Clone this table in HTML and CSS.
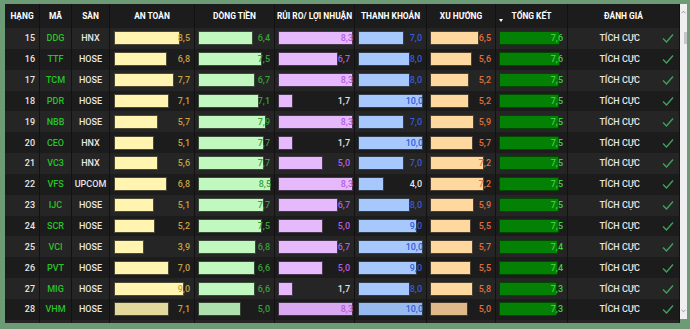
FILE: index.html
```html
<!DOCTYPE html>
<html lang="vi">
<head>
<meta charset="utf-8">
<title>Bảng xếp hạng</title>
<link rel="stylesheet" href="styles.css">
</head>
<body>
<div class="frame">
  <div class="table">
    <div class="row head">
      <div class="cell c">HẠNG</div>
      <div class="cell c">MÃ</div>
      <div class="cell c">SÀN</div>
      <div class="cell c">AN TOÀN</div>
      <div class="cell c">DÒNG TIỀN</div>
      <div class="cell c">RỦI RO/ LỢI NHUẬN</div>
      <div class="cell c">THANH KHOẢN</div>
      <div class="cell c">XU HƯỚNG</div>
      <div class="cell c sort"><span class="tri"></span>TỔNG KẾT</div>
      <div class="cell c">ĐÁNH GIÁ</div>
    </div>

    <div class="row odd">
      <div class="cell r">15</div><div class="cell c code">DDG</div><div class="cell c">HNX</div>
      <div class="cell bc at"><span class="bar" style="width:66px"></span><span class="val">8,5</span></div>
      <div class="cell bc dt"><span class="bar" style="width:55px"></span><span class="val">6,4</span></div>
      <div class="cell bc rr"><span class="bar" style="width:75px"></span><span class="val">8,3</span></div>
      <div class="cell bc tk"><span class="bar" style="width:46px"></span><span class="val">7,0</span></div>
      <div class="cell bc xh"><span class="bar" style="width:49px"></span><span class="val">6,5</span></div>
      <div class="cell bc tg"><span class="bar" style="width:61px"></span><span class="val">7,6</span></div>
      <div class="cell eval"><span class="lbl">TÍCH CỰC</span><svg class="chk" viewBox="0 0 12 10"><polyline points="1,5.5 4.5,9 11,1.5"/></svg></div>
    </div>
    <div class="row even">
      <div class="cell r">16</div><div class="cell c code">TTF</div><div class="cell c">HOSE</div>
      <div class="cell bc at"><span class="bar" style="width:53px"></span><span class="val">6,8</span></div>
      <div class="cell bc dt"><span class="bar" style="width:64px"></span><span class="val">7,5</span></div>
      <div class="cell bc rr"><span class="bar" style="width:60px"></span><span class="val">6,7</span></div>
      <div class="cell bc tk"><span class="bar" style="width:52px"></span><span class="val">8,0</span></div>
      <div class="cell bc xh"><span class="bar" style="width:42px"></span><span class="val">5,6</span></div>
      <div class="cell bc tg"><span class="bar" style="width:61px"></span><span class="val">7,6</span></div>
      <div class="cell eval"><span class="lbl">TÍCH CỰC</span><svg class="chk" viewBox="0 0 12 10"><polyline points="1,5.5 4.5,9 11,1.5"/></svg></div>
    </div>
    <div class="row odd">
      <div class="cell r">17</div><div class="cell c code">TCM</div><div class="cell c">HOSE</div>
      <div class="cell bc at"><span class="bar" style="width:60px"></span><span class="val">7,7</span></div>
      <div class="cell bc dt"><span class="bar" style="width:57px"></span><span class="val">6,7</span></div>
      <div class="cell bc rr"><span class="bar" style="width:75px"></span><span class="val">8,3</span></div>
      <div class="cell bc tk"><span class="bar" style="width:52px"></span><span class="val">8,0</span></div>
      <div class="cell bc xh"><span class="bar" style="width:39px"></span><span class="val">5,2</span></div>
      <div class="cell bc tg"><span class="bar" style="width:60px"></span><span class="val">7,5</span></div>
      <div class="cell eval"><span class="lbl">TÍCH CỰC</span><svg class="chk" viewBox="0 0 12 10"><polyline points="1,5.5 4.5,9 11,1.5"/></svg></div>
    </div>
    <div class="row even">
      <div class="cell r">18</div><div class="cell c code">PDR</div><div class="cell c">HOSE</div>
      <div class="cell bc at"><span class="bar" style="width:55px"></span><span class="val">7,1</span></div>
      <div class="cell bc dt"><span class="bar" style="width:61px"></span><span class="val">7,1</span></div>
      <div class="cell bc rr"><span class="bar" style="width:15px"></span><span class="val low">1,7</span></div>
      <div class="cell bc tk"><span class="bar" style="width:65px"></span><span class="val">10,0</span></div>
      <div class="cell bc xh"><span class="bar" style="width:39px"></span><span class="val">5,2</span></div>
      <div class="cell bc tg"><span class="bar" style="width:60px"></span><span class="val">7,5</span></div>
      <div class="cell eval"><span class="lbl">TÍCH CỰC</span><svg class="chk" viewBox="0 0 12 10"><polyline points="1,5.5 4.5,9 11,1.5"/></svg></div>
    </div>
    <div class="row odd">
      <div class="cell r">19</div><div class="cell c code">NBB</div><div class="cell c">HOSE</div>
      <div class="cell bc at"><span class="bar" style="width:44px"></span><span class="val">5,7</span></div>
      <div class="cell bc dt"><span class="bar" style="width:68px"></span><span class="val">7,9</span></div>
      <div class="cell bc rr"><span class="bar" style="width:75px"></span><span class="val">8,3</span></div>
      <div class="cell bc tk"><span class="bar" style="width:46px"></span><span class="val">7,0</span></div>
      <div class="cell bc xh"><span class="bar" style="width:44px"></span><span class="val">5,9</span></div>
      <div class="cell bc tg"><span class="bar" style="width:60px"></span><span class="val">7,5</span></div>
      <div class="cell eval"><span class="lbl">TÍCH CỰC</span><svg class="chk" viewBox="0 0 12 10"><polyline points="1,5.5 4.5,9 11,1.5"/></svg></div>
    </div>
    <div class="row even">
      <div class="cell r">20</div><div class="cell c code">CEO</div><div class="cell c">HNX</div>
      <div class="cell bc at"><span class="bar" style="width:40px"></span><span class="val">5,1</span></div>
      <div class="cell bc dt"><span class="bar" style="width:66px"></span><span class="val">7,7</span></div>
      <div class="cell bc rr"><span class="bar" style="width:15px"></span><span class="val low">1,7</span></div>
      <div class="cell bc tk"><span class="bar" style="width:65px"></span><span class="val">10,0</span></div>
      <div class="cell bc xh"><span class="bar" style="width:43px"></span><span class="val">5,7</span></div>
      <div class="cell bc tg"><span class="bar" style="width:60px"></span><span class="val">7,5</span></div>
      <div class="cell eval"><span class="lbl">TÍCH CỰC</span><svg class="chk" viewBox="0 0 12 10"><polyline points="1,5.5 4.5,9 11,1.5"/></svg></div>
    </div>
    <div class="row odd">
      <div class="cell r">21</div><div class="cell c code">VC3</div><div class="cell c">HNX</div>
      <div class="cell bc at"><span class="bar" style="width:44px"></span><span class="val">5,6</span></div>
      <div class="cell bc dt"><span class="bar" style="width:66px"></span><span class="val">7,7</span></div>
      <div class="cell bc rr"><span class="bar" style="width:45px"></span><span class="val">5,0</span></div>
      <div class="cell bc tk"><span class="bar" style="width:46px"></span><span class="val">7,0</span></div>
      <div class="cell bc xh"><span class="bar" style="width:54px"></span><span class="val">7,2</span></div>
      <div class="cell bc tg"><span class="bar" style="width:60px"></span><span class="val">7,5</span></div>
      <div class="cell eval"><span class="lbl">TÍCH CỰC</span><svg class="chk" viewBox="0 0 12 10"><polyline points="1,5.5 4.5,9 11,1.5"/></svg></div>
    </div>
    <div class="row even">
      <div class="cell r">22</div><div class="cell c code">VFS</div><div class="cell c">UPCOM</div>
      <div class="cell bc at"><span class="bar" style="width:53px"></span><span class="val">6,8</span></div>
      <div class="cell bc dt"><span class="bar" style="width:73px"></span><span class="val">8,5</span></div>
      <div class="cell bc rr"><span class="bar" style="width:75px"></span><span class="val">8,3</span></div>
      <div class="cell bc tk"><span class="bar" style="width:26px"></span><span class="val low">4,0</span></div>
      <div class="cell bc xh"><span class="bar" style="width:54px"></span><span class="val">7,2</span></div>
      <div class="cell bc tg"><span class="bar" style="width:60px"></span><span class="val">7,5</span></div>
      <div class="cell eval"><span class="lbl">TÍCH CỰC</span><svg class="chk" viewBox="0 0 12 10"><polyline points="1,5.5 4.5,9 11,1.5"/></svg></div>
    </div>
    <div class="row odd">
      <div class="cell r">23</div><div class="cell c code">IJC</div><div class="cell c">HOSE</div>
      <div class="cell bc at"><span class="bar" style="width:40px"></span><span class="val">5,1</span></div>
      <div class="cell bc dt"><span class="bar" style="width:66px"></span><span class="val">7,7</span></div>
      <div class="cell bc rr"><span class="bar" style="width:60px"></span><span class="val">6,7</span></div>
      <div class="cell bc tk"><span class="bar" style="width:52px"></span><span class="val">8,0</span></div>
      <div class="cell bc xh"><span class="bar" style="width:44px"></span><span class="val">5,9</span></div>
      <div class="cell bc tg"><span class="bar" style="width:60px"></span><span class="val">7,5</span></div>
      <div class="cell eval"><span class="lbl">TÍCH CỰC</span><svg class="chk" viewBox="0 0 12 10"><polyline points="1,5.5 4.5,9 11,1.5"/></svg></div>
    </div>
    <div class="row even">
      <div class="cell r">24</div><div class="cell c code">SCR</div><div class="cell c">HOSE</div>
      <div class="cell bc at"><span class="bar" style="width:41px"></span><span class="val">5,2</span></div>
      <div class="cell bc dt"><span class="bar" style="width:64px"></span><span class="val">7,5</span></div>
      <div class="cell bc rr"><span class="bar" style="width:45px"></span><span class="val">5,0</span></div>
      <div class="cell bc tk"><span class="bar" style="width:59px"></span><span class="val">9,0</span></div>
      <div class="cell bc xh"><span class="bar" style="width:41px"></span><span class="val">5,5</span></div>
      <div class="cell bc tg"><span class="bar" style="width:60px"></span><span class="val">7,5</span></div>
      <div class="cell eval"><span class="lbl">TÍCH CỰC</span><svg class="chk" viewBox="0 0 12 10"><polyline points="1,5.5 4.5,9 11,1.5"/></svg></div>
    </div>
    <div class="row odd">
      <div class="cell r">25</div><div class="cell c code">VCI</div><div class="cell c">HOSE</div>
      <div class="cell bc at"><span class="bar" style="width:30px"></span><span class="val">3,9</span></div>
      <div class="cell bc dt"><span class="bar" style="width:58px"></span><span class="val">6,8</span></div>
      <div class="cell bc rr"><span class="bar" style="width:60px"></span><span class="val">6,7</span></div>
      <div class="cell bc tk"><span class="bar" style="width:65px"></span><span class="val">10,0</span></div>
      <div class="cell bc xh"><span class="bar" style="width:43px"></span><span class="val">5,7</span></div>
      <div class="cell bc tg"><span class="bar" style="width:59px"></span><span class="val">7,4</span></div>
      <div class="cell eval"><span class="lbl">TÍCH CỰC</span><svg class="chk" viewBox="0 0 12 10"><polyline points="1,5.5 4.5,9 11,1.5"/></svg></div>
    </div>
    <div class="row even">
      <div class="cell r">26</div><div class="cell c code">PVT</div><div class="cell c">HOSE</div>
      <div class="cell bc at"><span class="bar" style="width:55px"></span><span class="val">7,0</span></div>
      <div class="cell bc dt"><span class="bar" style="width:57px"></span><span class="val">6,6</span></div>
      <div class="cell bc rr"><span class="bar" style="width:45px"></span><span class="val">5,0</span></div>
      <div class="cell bc tk"><span class="bar" style="width:59px"></span><span class="val">9,0</span></div>
      <div class="cell bc xh"><span class="bar" style="width:41px"></span><span class="val">5,5</span></div>
      <div class="cell bc tg"><span class="bar" style="width:59px"></span><span class="val">7,4</span></div>
      <div class="cell eval"><span class="lbl">TÍCH CỰC</span><svg class="chk" viewBox="0 0 12 10"><polyline points="1,5.5 4.5,9 11,1.5"/></svg></div>
    </div>
    <div class="row odd">
      <div class="cell r">27</div><div class="cell c code">MIG</div><div class="cell c">HOSE</div>
      <div class="cell bc at"><span class="bar" style="width:70px"></span><span class="val">9,0</span></div>
      <div class="cell bc dt"><span class="bar" style="width:57px"></span><span class="val">6,6</span></div>
      <div class="cell bc rr"><span class="bar" style="width:15px"></span><span class="val low">1,7</span></div>
      <div class="cell bc tk"><span class="bar" style="width:52px"></span><span class="val">8,0</span></div>
      <div class="cell bc xh"><span class="bar" style="width:43px"></span><span class="val">5,8</span></div>
      <div class="cell bc tg"><span class="bar" style="width:58px"></span><span class="val">7,3</span></div>
      <div class="cell eval"><span class="lbl">TÍCH CỰC</span><svg class="chk" viewBox="0 0 12 10"><polyline points="1,5.5 4.5,9 11,1.5"/></svg></div>
    </div>
    <div class="row even dim">
      <div class="cell r">28</div><div class="cell c code">VHM</div><div class="cell c">HOSE</div>
      <div class="cell bc at"><span class="bar" style="width:55px"></span><span class="val">7,1</span></div>
      <div class="cell bc dt"><span class="bar" style="width:43px"></span><span class="val">5,0</span></div>
      <div class="cell bc rr"><span class="bar" style="width:75px"></span><span class="val">8,3</span></div>
      <div class="cell bc tk"><span class="bar" style="width:65px"></span><span class="val">10,0</span></div>
      <div class="cell bc xh"><span class="bar" style="width:38px"></span><span class="val">5,0</span></div>
      <div class="cell bc tg"><span class="bar" style="width:58px"></span><span class="val">7,3</span></div>
      <div class="cell eval"><span class="lbl">TÍCH CỰC</span><svg class="chk" viewBox="0 0 12 10"><polyline points="1,5.5 4.5,9 11,1.5"/></svg></div>
    </div>
    <div class="row odd">
      <div class="cell"></div><div class="cell"></div><div class="cell"></div>
      <div class="cell bc at"><span class="bar" style="width:46px"></span></div>
      <div class="cell bc dt"><span class="bar" style="width:60px"></span></div>
      <div class="cell bc rr"><span class="bar" style="width:60px"></span></div>
      <div class="cell bc tk"><span class="bar" style="width:52px"></span></div>
      <div class="cell bc xh"><span class="bar" style="width:42px"></span></div>
      <div class="cell bc tg"><span class="bar" style="width:58px"></span></div>
      <div class="cell"></div>
    </div>
  </div>
  <div class="scroll">
    <svg class="arr" viewBox="0 0 6 4"><polyline points="0.5,3.5 3,1 5.5,3.5"/></svg>
    <div class="track"><div class="thumb"></div></div>
    <svg class="arr" viewBox="0 0 6 4"><polyline points="0.5,0.5 3,3 5.5,0.5"/></svg>
  </div>
</div>
</body>
</html>
```

FILE: styles.css
```css
html, body {
  margin: 0;
  padding: 0;
  background: #6c9b76;
  width: 690px;
  height: 329px;
  overflow: hidden;
}

.frame {
  display: flex;
  margin: 4px 3px 0 5px;
  height: 319px;
}

.table {
  width: 675px;
  height: 319px;
  overflow: hidden;
  background: #1d1d1d;
  font-family: Roboto, "Noto Sans", sans-serif;
  color: #e6e6e6;
}

.row {
  display: grid;
  grid-template-columns: 35px 32px 38px 85px 80px 80px 72px 69px 72px 112px;
  height: 20.85px;
  font-size: 9px;
  font-weight: 500;
}

.row.head {
  height: 24px;
  background: #1c1c1c;
  font-size: 8.4px;
  font-weight: 700;
  color: #ffffff;
}

.row.odd { background: #252525; }
.row.even { background: #1c1c1c; }

.cell {
  box-sizing: border-box;
  border-right: 1px solid #121212;
  display: flex;
  align-items: center;
  padding: 0 3px;
  white-space: nowrap;
  overflow: hidden;
}

.cell.c { justify-content: center; }
.cell.r { justify-content: flex-end; padding-right: 4px; }

.code { color: #27c427; }

.sort { position: relative; }
.tri {
  position: absolute;
  left: 3px;
  top: 15px;
  width: 0;
  height: 0;
  border-left: 2.5px solid transparent;
  border-right: 2.5px solid transparent;
  border-top: 3px solid #ffffff;
}

.bc {
  display: grid;
  align-items: center;
  padding: 0 4px 0 3px;
}
.bc.at { padding-left: 4px; }

.bar {
  grid-area: 1 / 1;
  justify-self: start;
  box-sizing: border-box;
  height: 14px;
  border: 1px solid rgba(0, 0, 0, 0.7);
}

.val {
  grid-area: 1 / 1;
  justify-self: end;
  position: relative;
  z-index: 1;
  font-weight: 500;
}

.at .bar { background: #fff4b0; }
.at .val { color: #c9a240; }
.dt .bar { background: #c0f8c0; }
.dt .val { color: #3aa03a; }
.rr .bar { background: #e6b8fc; }
.rr .val { color: #b55ee0; }
.tk .bar { background: #a6c8fc; }
.tk .val { color: #3a5ad8; }
.xh .bar { background: #ffd8a0; }
.xh .val { color: #e0703c; }
.tg .bar { background: #048004; border-color: rgba(0, 0, 0, 0.45); }
.tg .val { color: #40d040; }

.val.low { color: #e6e6e6; }

.dim .at .bar { background: #e3d99c; }
.dim .dt .bar { background: #aee0ae; }
.dim .rr .bar { background: #d8a8f0; }
.dim .tk .bar { background: #98bbef; }
.dim .xh .bar { background: #dfb98a; }

.eval {
  justify-content: flex-end;
  padding-right: 5px;
}
.lbl {
  margin-right: 22px;
}
.chk {
  width: 12px;
  height: 10px;
  fill: none;
  stroke: #3fa25a;
  stroke-width: 1.4;
}

.scroll {
  width: 7px;
  height: 315px;
  background: #efefef;
  display: flex;
  flex-direction: column;
  align-items: center;
}
.arr {
  width: 5px;
  height: 4px;
  margin: 6px 0;
  fill: none;
  stroke: #8a8a8a;
  stroke-width: 1;
}
.track {
  flex: 1;
  width: 100%;
  display: flex;
  justify-content: flex-end;
}
.thumb {
  width: 3px;
  height: 12px;
  margin-top: 12px;
  background: #c6c6c6;
}
```
